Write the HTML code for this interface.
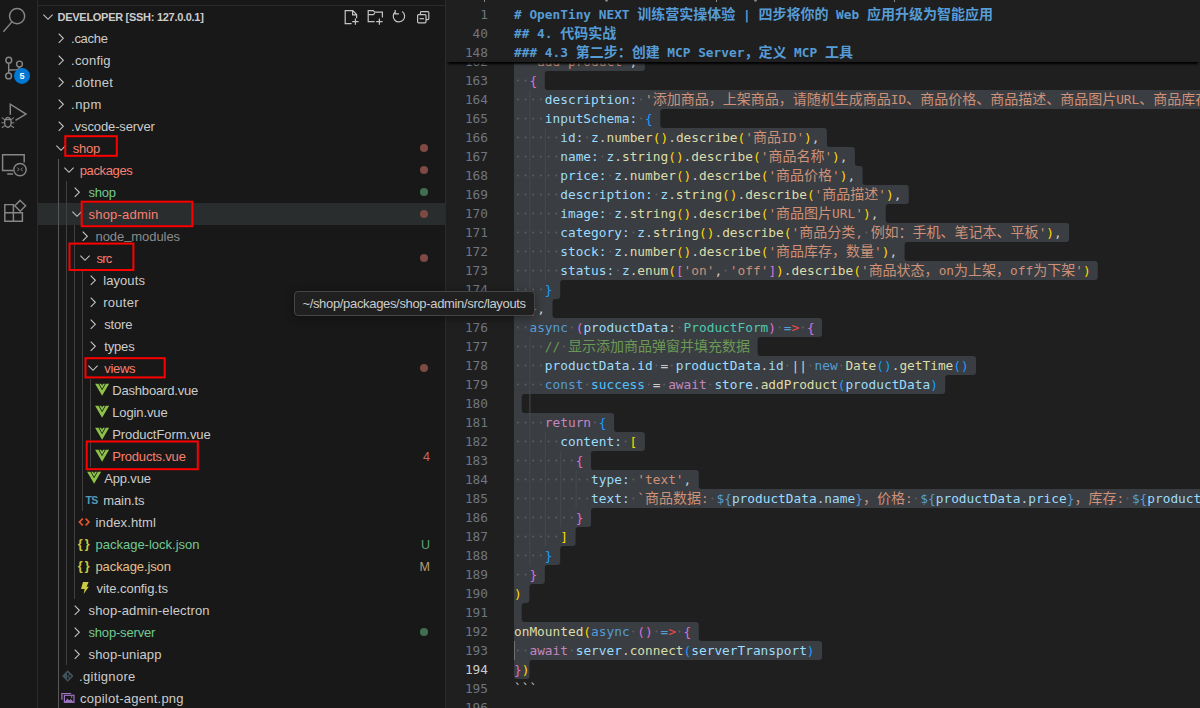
<!DOCTYPE html>
<html lang="zh"><head><meta charset="utf-8"><title>VS Code</title>
<style>
html,body{margin:0;padding:0;background:#1f1f1f;}
body{width:1200px;height:708px;overflow:hidden;position:relative;font-family:"Liberation Sans","Noto Sans CJK SC",sans-serif;}
#act{position:absolute;left:0;top:0;width:37px;height:708px;background:#181818;border-right:1px solid #2b2b2b;}
#side{position:absolute;left:38px;top:0;width:407px;height:708px;background:#181818;border-right:1px solid #2b2b2b;}
#sidetop{position:absolute;left:38px;top:5px;width:407px;height:1px;background:#2b2b2b}
.tl{position:absolute;height:22px;line-height:22px;font-size:13px;white-space:nowrap}
.us{position:relative;top:-2px}
.tb{position:absolute;height:22px;line-height:22px;font-size:12.5px;left:400px;white-space:nowrap;text-align:right;width:30px;opacity:.78}
.hdr{position:absolute;top:6px;height:22px;line-height:22px;font-size:11px;font-weight:700;color:#cccccc;white-space:nowrap}
.rowsel{position:absolute;left:38px;top:203px;width:407px;height:22px;background:#2a2d2e}
svg.ov{position:absolute;left:0;top:0;pointer-events:none}
.ln{position:absolute;left:448px;width:40px;text-align:right;height:19px;line-height:19px;font-family:"DejaVu Sans Mono","Liberation Mono",monospace;font-size:12.8px;color:#6e7681;white-space:pre}
.ln.act{color:#cccccc}
.cl{position:absolute;left:514px;height:19px;line-height:19px;font-family:"DejaVu Sans Mono","Liberation Mono","Noto Sans CJK SC",monospace;font-size:12.8px;white-space:pre;color:#ccc}
.cl.b{font-weight:700}
.cj{font-family:"Noto Sans CJK SC",sans-serif;font-size:14px;line-height:1px}
#sticky{position:absolute;left:446px;top:0;width:754px;height:62px;background:#1f1f1f;box-shadow:0 4px 2px -2px #000;}
#tip{position:absolute;left:294px;top:291px;width:239px;height:23px;background:#202020;border:1px solid #454545;border-radius:4px;color:#cccccc;font-size:13px;line-height:23px;white-space:nowrap;box-shadow:0 2px 8px rgba(0,0,0,0.36)}
#tip span{position:absolute;top:0}
</style></head><body>
<div id="act"></div>
<div id="side"></div>
<div id="sidetop"></div>
<div class="rowsel"></div>
<svg class="ov" width="1200" height="708" viewBox="0 0 1200 708"><path d="M517 52 L641.90 52 A3 3 0 0 1 644.90 55 L644.90 68 A3 3 0 0 1 641.90 71 L547.80 71 A3 3 0 0 0 544.80 74 L544.80 87 A3 3 0 0 0 547.80 90 L1207 90 A3 3 0 0 1 1210 93 L1210 106 A3 3 0 0 1 1207 109 L663.30 109 A3 3 0 0 0 660.30 112 L660.30 125 A3 3 0 0 0 663.30 128 L823.90 128 A3 3 0 0 1 826.90 131 L826.90 144 A3 3 0 0 0 829.90 147 L851.90 147 A3 3 0 0 1 854.90 150 L854.90 163 A3 3 0 0 0 857.90 166 L859.60 166 A3 3 0 0 1 862.60 169 L862.60 182 A3 3 0 0 0 865.60 185 L905.80 185 A3 3 0 0 1 908.80 188 L908.80 201 A3 3 0 0 1 905.80 204 L888.7 204 A3 3 0 0 0 885.7 207 L885.7 220 A3 3 0 0 0 888.7 223 L1066.10 223 A3 3 0 0 1 1069.10 226 L1069.10 239 A3 3 0 0 1 1066.10 242 L907.60 242 A3 3 0 0 0 904.60 245 L904.60 258 A3 3 0 0 0 907.60 261 L1094.8 261 A3 3 0 0 1 1097.8 264 L1097.8 277 A3 3 0 0 1 1094.8 280 L563.2 280 A3 3 0 0 0 560.2 283 L560.2 296 A3 3 0 0 1 557.2 299 L555.5 299 A3 3 0 0 0 552.5 302 L552.5 315 A3 3 0 0 0 555.5 318 L819.0 318 A3 3 0 0 1 822.0 321 L822.0 334 A3 3 0 0 1 819.0 337 L760.6 337 A3 3 0 0 0 757.6 340 L757.6 353 A3 3 0 0 0 760.6 356 L973.0 356 A3 3 0 0 1 976.0 359 L976.0 372 A3 3 0 0 1 973.0 375 L948.2 375 A3 3 0 0 0 945.2 378 L945.2 391 A3 3 0 0 1 942.2 394 L524.7 394 A3 3 0 0 0 521.7 397 L521.7 410 A3 3 0 0 0 524.7 413 L611.1 413 A3 3 0 0 1 614.1 416 L614.1 429 A3 3 0 0 0 617.1 432 L641.90 432 A3 3 0 0 1 644.90 435 L644.90 448 A3 3 0 0 1 641.90 451 L594.0 451 A3 3 0 0 0 591.0 454 L591.0 467 A3 3 0 0 0 594.0 470 L695.80 470 A3 3 0 0 1 698.80 473 L698.80 486 A3 3 0 0 0 701.80 489 L1207 489 A3 3 0 0 1 1210 492 L1210 505 A3 3 0 0 1 1207 508 L594.0 508 A3 3 0 0 0 591.0 511 L591.0 524 A3 3 0 0 1 588.0 527 L578.6 527 A3 3 0 0 0 575.6 530 L575.6 543 A3 3 0 0 1 572.6 546 L563.2 546 A3 3 0 0 0 560.2 549 L560.2 562 A3 3 0 0 1 557.2 565 L547.80 565 A3 3 0 0 0 544.80 568 L544.80 581 A3 3 0 0 1 541.80 584 L532.40 584 A3 3 0 0 0 529.40 587 L529.40 600 A3 3 0 0 1 526.40 603 L524.7 603 A3 3 0 0 0 521.7 606 L521.7 619 A3 3 0 0 0 524.7 622 L695.80 622 A3 3 0 0 1 698.80 625 L698.80 638 A3 3 0 0 0 701.80 641 L819.0 641 A3 3 0 0 1 822.0 644 L822.0 657 A3 3 0 0 1 819.0 660 L532.4 660 A3 3 0 0 0 529.4 663 L529.4 676 A3 3 0 0 1 526.4 679 L517 679 A3 3 0 0 1 514 676 L514 55 A3 3 0 0 1 517 52 Z" fill="#3a3d41"/><rect x="529.4" y="90" width="1" height="19" fill="#474a4e"/><rect x="529.4" y="109" width="1" height="19" fill="#474a4e"/><rect x="529.4" y="128" width="1" height="19" fill="#474a4e"/><rect x="544.8" y="128" width="1" height="19" fill="#474a4e"/><rect x="529.4" y="147" width="1" height="19" fill="#474a4e"/><rect x="544.8" y="147" width="1" height="19" fill="#474a4e"/><rect x="529.4" y="166" width="1" height="19" fill="#474a4e"/><rect x="544.8" y="166" width="1" height="19" fill="#474a4e"/><rect x="529.4" y="185" width="1" height="19" fill="#474a4e"/><rect x="544.8" y="185" width="1" height="19" fill="#474a4e"/><rect x="529.4" y="204" width="1" height="19" fill="#474a4e"/><rect x="544.8" y="204" width="1" height="19" fill="#474a4e"/><rect x="529.4" y="223" width="1" height="19" fill="#474a4e"/><rect x="544.8" y="223" width="1" height="19" fill="#474a4e"/><rect x="529.4" y="242" width="1" height="19" fill="#474a4e"/><rect x="544.8" y="242" width="1" height="19" fill="#474a4e"/><rect x="529.4" y="261" width="1" height="19" fill="#474a4e"/><rect x="544.8" y="261" width="1" height="19" fill="#474a4e"/><rect x="529.4" y="280" width="1" height="19" fill="#474a4e"/><rect x="529.4" y="337" width="1" height="19" fill="#474a4e"/><rect x="529.4" y="356" width="1" height="19" fill="#474a4e"/><rect x="529.4" y="375" width="1" height="19" fill="#474a4e"/><rect x="529.4" y="394" width="1" height="19" fill="#474a4e"/><rect x="529.4" y="413" width="1" height="19" fill="#474a4e"/><rect x="529.4" y="432" width="1" height="19" fill="#474a4e"/><rect x="544.8" y="432" width="1" height="19" fill="#474a4e"/><rect x="529.4" y="451" width="1" height="19" fill="#474a4e"/><rect x="544.8" y="451" width="1" height="19" fill="#474a4e"/><rect x="560.2" y="451" width="1" height="19" fill="#474a4e"/><rect x="529.4" y="470" width="1" height="19" fill="#474a4e"/><rect x="544.8" y="470" width="1" height="19" fill="#474a4e"/><rect x="560.2" y="470" width="1" height="19" fill="#474a4e"/><rect x="575.6" y="470" width="1" height="19" fill="#474a4e"/><rect x="529.4" y="489" width="1" height="19" fill="#474a4e"/><rect x="544.8" y="489" width="1" height="19" fill="#474a4e"/><rect x="560.2" y="489" width="1" height="19" fill="#474a4e"/><rect x="575.6" y="489" width="1" height="19" fill="#474a4e"/><rect x="529.4" y="508" width="1" height="19" fill="#474a4e"/><rect x="544.8" y="508" width="1" height="19" fill="#474a4e"/><rect x="560.2" y="508" width="1" height="19" fill="#474a4e"/><rect x="529.4" y="527" width="1" height="19" fill="#474a4e"/><rect x="544.8" y="527" width="1" height="19" fill="#474a4e"/><rect x="529.4" y="546" width="1" height="19" fill="#474a4e"/><rect x="514.0" y="641" width="1" height="19" fill="#707070"/><rect x="516.95" y="60.6" width="1.8" height="1.8" rx="0.7" fill="#5c5e62"/><rect x="524.65" y="60.6" width="1.8" height="1.8" rx="0.7" fill="#5c5e62"/><rect x="516.95" y="79.6" width="1.8" height="1.8" rx="0.7" fill="#5c5e62"/><rect x="524.65" y="79.6" width="1.8" height="1.8" rx="0.7" fill="#5c5e62"/><rect x="516.95" y="98.6" width="1.8" height="1.8" rx="0.7" fill="#5c5e62"/><rect x="524.65" y="98.6" width="1.8" height="1.8" rx="0.7" fill="#5c5e62"/><rect x="532.35" y="98.6" width="1.8" height="1.8" rx="0.7" fill="#5c5e62"/><rect x="540.05" y="98.6" width="1.8" height="1.8" rx="0.7" fill="#5c5e62"/><rect x="640.15" y="98.6" width="1.8" height="1.8" rx="0.7" fill="#5c5e62"/><rect x="516.95" y="117.6" width="1.8" height="1.8" rx="0.7" fill="#5c5e62"/><rect x="524.65" y="117.6" width="1.8" height="1.8" rx="0.7" fill="#5c5e62"/><rect x="532.35" y="117.6" width="1.8" height="1.8" rx="0.7" fill="#5c5e62"/><rect x="540.05" y="117.6" width="1.8" height="1.8" rx="0.7" fill="#5c5e62"/><rect x="640.15" y="117.6" width="1.8" height="1.8" rx="0.7" fill="#5c5e62"/><rect x="516.95" y="136.6" width="1.8" height="1.8" rx="0.7" fill="#5c5e62"/><rect x="524.65" y="136.6" width="1.8" height="1.8" rx="0.7" fill="#5c5e62"/><rect x="532.35" y="136.6" width="1.8" height="1.8" rx="0.7" fill="#5c5e62"/><rect x="540.05" y="136.6" width="1.8" height="1.8" rx="0.7" fill="#5c5e62"/><rect x="547.75" y="136.6" width="1.8" height="1.8" rx="0.7" fill="#5c5e62"/><rect x="555.45" y="136.6" width="1.8" height="1.8" rx="0.7" fill="#5c5e62"/><rect x="586.25" y="136.6" width="1.8" height="1.8" rx="0.7" fill="#5c5e62"/><rect x="516.95" y="155.6" width="1.8" height="1.8" rx="0.7" fill="#5c5e62"/><rect x="524.65" y="155.6" width="1.8" height="1.8" rx="0.7" fill="#5c5e62"/><rect x="532.35" y="155.6" width="1.8" height="1.8" rx="0.7" fill="#5c5e62"/><rect x="540.05" y="155.6" width="1.8" height="1.8" rx="0.7" fill="#5c5e62"/><rect x="547.75" y="155.6" width="1.8" height="1.8" rx="0.7" fill="#5c5e62"/><rect x="555.45" y="155.6" width="1.8" height="1.8" rx="0.7" fill="#5c5e62"/><rect x="601.65" y="155.6" width="1.8" height="1.8" rx="0.7" fill="#5c5e62"/><rect x="516.95" y="174.6" width="1.8" height="1.8" rx="0.7" fill="#5c5e62"/><rect x="524.65" y="174.6" width="1.8" height="1.8" rx="0.7" fill="#5c5e62"/><rect x="532.35" y="174.6" width="1.8" height="1.8" rx="0.7" fill="#5c5e62"/><rect x="540.05" y="174.6" width="1.8" height="1.8" rx="0.7" fill="#5c5e62"/><rect x="547.75" y="174.6" width="1.8" height="1.8" rx="0.7" fill="#5c5e62"/><rect x="555.45" y="174.6" width="1.8" height="1.8" rx="0.7" fill="#5c5e62"/><rect x="609.35" y="174.6" width="1.8" height="1.8" rx="0.7" fill="#5c5e62"/><rect x="516.95" y="193.6" width="1.8" height="1.8" rx="0.7" fill="#5c5e62"/><rect x="524.65" y="193.6" width="1.8" height="1.8" rx="0.7" fill="#5c5e62"/><rect x="532.35" y="193.6" width="1.8" height="1.8" rx="0.7" fill="#5c5e62"/><rect x="540.05" y="193.6" width="1.8" height="1.8" rx="0.7" fill="#5c5e62"/><rect x="547.75" y="193.6" width="1.8" height="1.8" rx="0.7" fill="#5c5e62"/><rect x="555.45" y="193.6" width="1.8" height="1.8" rx="0.7" fill="#5c5e62"/><rect x="655.55" y="193.6" width="1.8" height="1.8" rx="0.7" fill="#5c5e62"/><rect x="516.95" y="212.6" width="1.8" height="1.8" rx="0.7" fill="#5c5e62"/><rect x="524.65" y="212.6" width="1.8" height="1.8" rx="0.7" fill="#5c5e62"/><rect x="532.35" y="212.6" width="1.8" height="1.8" rx="0.7" fill="#5c5e62"/><rect x="540.05" y="212.6" width="1.8" height="1.8" rx="0.7" fill="#5c5e62"/><rect x="547.75" y="212.6" width="1.8" height="1.8" rx="0.7" fill="#5c5e62"/><rect x="555.45" y="212.6" width="1.8" height="1.8" rx="0.7" fill="#5c5e62"/><rect x="609.35" y="212.6" width="1.8" height="1.8" rx="0.7" fill="#5c5e62"/><rect x="516.95" y="231.6" width="1.8" height="1.8" rx="0.7" fill="#5c5e62"/><rect x="524.65" y="231.6" width="1.8" height="1.8" rx="0.7" fill="#5c5e62"/><rect x="532.35" y="231.6" width="1.8" height="1.8" rx="0.7" fill="#5c5e62"/><rect x="540.05" y="231.6" width="1.8" height="1.8" rx="0.7" fill="#5c5e62"/><rect x="547.75" y="231.6" width="1.8" height="1.8" rx="0.7" fill="#5c5e62"/><rect x="555.45" y="231.6" width="1.8" height="1.8" rx="0.7" fill="#5c5e62"/><rect x="632.45" y="231.6" width="1.8" height="1.8" rx="0.7" fill="#5c5e62"/><rect x="865.55" y="231.6" width="1.8" height="1.8" rx="0.7" fill="#5c5e62"/><rect x="516.95" y="250.6" width="1.8" height="1.8" rx="0.7" fill="#5c5e62"/><rect x="524.65" y="250.6" width="1.8" height="1.8" rx="0.7" fill="#5c5e62"/><rect x="532.35" y="250.6" width="1.8" height="1.8" rx="0.7" fill="#5c5e62"/><rect x="540.05" y="250.6" width="1.8" height="1.8" rx="0.7" fill="#5c5e62"/><rect x="547.75" y="250.6" width="1.8" height="1.8" rx="0.7" fill="#5c5e62"/><rect x="555.45" y="250.6" width="1.8" height="1.8" rx="0.7" fill="#5c5e62"/><rect x="609.35" y="250.6" width="1.8" height="1.8" rx="0.7" fill="#5c5e62"/><rect x="516.95" y="269.6" width="1.8" height="1.8" rx="0.7" fill="#5c5e62"/><rect x="524.65" y="269.6" width="1.8" height="1.8" rx="0.7" fill="#5c5e62"/><rect x="532.35" y="269.6" width="1.8" height="1.8" rx="0.7" fill="#5c5e62"/><rect x="540.05" y="269.6" width="1.8" height="1.8" rx="0.7" fill="#5c5e62"/><rect x="547.75" y="269.6" width="1.8" height="1.8" rx="0.7" fill="#5c5e62"/><rect x="555.45" y="269.6" width="1.8" height="1.8" rx="0.7" fill="#5c5e62"/><rect x="617.05" y="269.6" width="1.8" height="1.8" rx="0.7" fill="#5c5e62"/><rect x="724.85" y="269.6" width="1.8" height="1.8" rx="0.7" fill="#5c5e62"/><rect x="516.95" y="288.6" width="1.8" height="1.8" rx="0.7" fill="#5c5e62"/><rect x="524.65" y="288.6" width="1.8" height="1.8" rx="0.7" fill="#5c5e62"/><rect x="532.35" y="288.6" width="1.8" height="1.8" rx="0.7" fill="#5c5e62"/><rect x="540.05" y="288.6" width="1.8" height="1.8" rx="0.7" fill="#5c5e62"/><rect x="516.95" y="307.6" width="1.8" height="1.8" rx="0.7" fill="#5c5e62"/><rect x="524.65" y="307.6" width="1.8" height="1.8" rx="0.7" fill="#5c5e62"/><rect x="516.95" y="326.6" width="1.8" height="1.8" rx="0.7" fill="#5c5e62"/><rect x="524.65" y="326.6" width="1.8" height="1.8" rx="0.7" fill="#5c5e62"/><rect x="570.85" y="326.6" width="1.8" height="1.8" rx="0.7" fill="#5c5e62"/><rect x="678.65" y="326.6" width="1.8" height="1.8" rx="0.7" fill="#5c5e62"/><rect x="778.75" y="326.6" width="1.8" height="1.8" rx="0.7" fill="#5c5e62"/><rect x="801.85" y="326.6" width="1.8" height="1.8" rx="0.7" fill="#5c5e62"/><rect x="516.95" y="345.6" width="1.8" height="1.8" rx="0.7" fill="#5c5e62"/><rect x="524.65" y="345.6" width="1.8" height="1.8" rx="0.7" fill="#5c5e62"/><rect x="532.35" y="345.6" width="1.8" height="1.8" rx="0.7" fill="#5c5e62"/><rect x="540.05" y="345.6" width="1.8" height="1.8" rx="0.7" fill="#5c5e62"/><rect x="563.15" y="345.6" width="1.8" height="1.8" rx="0.7" fill="#5c5e62"/><rect x="516.95" y="364.6" width="1.8" height="1.8" rx="0.7" fill="#5c5e62"/><rect x="524.65" y="364.6" width="1.8" height="1.8" rx="0.7" fill="#5c5e62"/><rect x="532.35" y="364.6" width="1.8" height="1.8" rx="0.7" fill="#5c5e62"/><rect x="540.05" y="364.6" width="1.8" height="1.8" rx="0.7" fill="#5c5e62"/><rect x="655.55" y="364.6" width="1.8" height="1.8" rx="0.7" fill="#5c5e62"/><rect x="670.95" y="364.6" width="1.8" height="1.8" rx="0.7" fill="#5c5e62"/><rect x="786.45" y="364.6" width="1.8" height="1.8" rx="0.7" fill="#5c5e62"/><rect x="809.55" y="364.6" width="1.8" height="1.8" rx="0.7" fill="#5c5e62"/><rect x="840.35" y="364.6" width="1.8" height="1.8" rx="0.7" fill="#5c5e62"/><rect x="516.95" y="383.6" width="1.8" height="1.8" rx="0.7" fill="#5c5e62"/><rect x="524.65" y="383.6" width="1.8" height="1.8" rx="0.7" fill="#5c5e62"/><rect x="532.35" y="383.6" width="1.8" height="1.8" rx="0.7" fill="#5c5e62"/><rect x="540.05" y="383.6" width="1.8" height="1.8" rx="0.7" fill="#5c5e62"/><rect x="586.25" y="383.6" width="1.8" height="1.8" rx="0.7" fill="#5c5e62"/><rect x="647.85" y="383.6" width="1.8" height="1.8" rx="0.7" fill="#5c5e62"/><rect x="663.25" y="383.6" width="1.8" height="1.8" rx="0.7" fill="#5c5e62"/><rect x="709.45" y="383.6" width="1.8" height="1.8" rx="0.7" fill="#5c5e62"/><rect x="516.95" y="421.6" width="1.8" height="1.8" rx="0.7" fill="#5c5e62"/><rect x="524.65" y="421.6" width="1.8" height="1.8" rx="0.7" fill="#5c5e62"/><rect x="532.35" y="421.6" width="1.8" height="1.8" rx="0.7" fill="#5c5e62"/><rect x="540.05" y="421.6" width="1.8" height="1.8" rx="0.7" fill="#5c5e62"/><rect x="593.95" y="421.6" width="1.8" height="1.8" rx="0.7" fill="#5c5e62"/><rect x="516.95" y="440.6" width="1.8" height="1.8" rx="0.7" fill="#5c5e62"/><rect x="524.65" y="440.6" width="1.8" height="1.8" rx="0.7" fill="#5c5e62"/><rect x="532.35" y="440.6" width="1.8" height="1.8" rx="0.7" fill="#5c5e62"/><rect x="540.05" y="440.6" width="1.8" height="1.8" rx="0.7" fill="#5c5e62"/><rect x="547.75" y="440.6" width="1.8" height="1.8" rx="0.7" fill="#5c5e62"/><rect x="555.45" y="440.6" width="1.8" height="1.8" rx="0.7" fill="#5c5e62"/><rect x="624.75" y="440.6" width="1.8" height="1.8" rx="0.7" fill="#5c5e62"/><rect x="516.95" y="459.6" width="1.8" height="1.8" rx="0.7" fill="#5c5e62"/><rect x="524.65" y="459.6" width="1.8" height="1.8" rx="0.7" fill="#5c5e62"/><rect x="532.35" y="459.6" width="1.8" height="1.8" rx="0.7" fill="#5c5e62"/><rect x="540.05" y="459.6" width="1.8" height="1.8" rx="0.7" fill="#5c5e62"/><rect x="547.75" y="459.6" width="1.8" height="1.8" rx="0.7" fill="#5c5e62"/><rect x="555.45" y="459.6" width="1.8" height="1.8" rx="0.7" fill="#5c5e62"/><rect x="563.15" y="459.6" width="1.8" height="1.8" rx="0.7" fill="#5c5e62"/><rect x="570.85" y="459.6" width="1.8" height="1.8" rx="0.7" fill="#5c5e62"/><rect x="516.95" y="478.6" width="1.8" height="1.8" rx="0.7" fill="#5c5e62"/><rect x="524.65" y="478.6" width="1.8" height="1.8" rx="0.7" fill="#5c5e62"/><rect x="532.35" y="478.6" width="1.8" height="1.8" rx="0.7" fill="#5c5e62"/><rect x="540.05" y="478.6" width="1.8" height="1.8" rx="0.7" fill="#5c5e62"/><rect x="547.75" y="478.6" width="1.8" height="1.8" rx="0.7" fill="#5c5e62"/><rect x="555.45" y="478.6" width="1.8" height="1.8" rx="0.7" fill="#5c5e62"/><rect x="563.15" y="478.6" width="1.8" height="1.8" rx="0.7" fill="#5c5e62"/><rect x="570.85" y="478.6" width="1.8" height="1.8" rx="0.7" fill="#5c5e62"/><rect x="578.55" y="478.6" width="1.8" height="1.8" rx="0.7" fill="#5c5e62"/><rect x="586.25" y="478.6" width="1.8" height="1.8" rx="0.7" fill="#5c5e62"/><rect x="632.45" y="478.6" width="1.8" height="1.8" rx="0.7" fill="#5c5e62"/><rect x="516.95" y="497.6" width="1.8" height="1.8" rx="0.7" fill="#5c5e62"/><rect x="524.65" y="497.6" width="1.8" height="1.8" rx="0.7" fill="#5c5e62"/><rect x="532.35" y="497.6" width="1.8" height="1.8" rx="0.7" fill="#5c5e62"/><rect x="540.05" y="497.6" width="1.8" height="1.8" rx="0.7" fill="#5c5e62"/><rect x="547.75" y="497.6" width="1.8" height="1.8" rx="0.7" fill="#5c5e62"/><rect x="555.45" y="497.6" width="1.8" height="1.8" rx="0.7" fill="#5c5e62"/><rect x="563.15" y="497.6" width="1.8" height="1.8" rx="0.7" fill="#5c5e62"/><rect x="570.85" y="497.6" width="1.8" height="1.8" rx="0.7" fill="#5c5e62"/><rect x="578.55" y="497.6" width="1.8" height="1.8" rx="0.7" fill="#5c5e62"/><rect x="586.25" y="497.6" width="1.8" height="1.8" rx="0.7" fill="#5c5e62"/><rect x="632.45" y="497.6" width="1.8" height="1.8" rx="0.7" fill="#5c5e62"/><rect x="711.55" y="497.6" width="1.8" height="1.8" rx="0.7" fill="#5c5e62"/><rect x="915.25" y="497.6" width="1.8" height="1.8" rx="0.7" fill="#5c5e62"/><rect x="1126.65" y="497.6" width="1.8" height="1.8" rx="0.7" fill="#5c5e62"/><rect x="516.95" y="516.6" width="1.8" height="1.8" rx="0.7" fill="#5c5e62"/><rect x="524.65" y="516.6" width="1.8" height="1.8" rx="0.7" fill="#5c5e62"/><rect x="532.35" y="516.6" width="1.8" height="1.8" rx="0.7" fill="#5c5e62"/><rect x="540.05" y="516.6" width="1.8" height="1.8" rx="0.7" fill="#5c5e62"/><rect x="547.75" y="516.6" width="1.8" height="1.8" rx="0.7" fill="#5c5e62"/><rect x="555.45" y="516.6" width="1.8" height="1.8" rx="0.7" fill="#5c5e62"/><rect x="563.15" y="516.6" width="1.8" height="1.8" rx="0.7" fill="#5c5e62"/><rect x="570.85" y="516.6" width="1.8" height="1.8" rx="0.7" fill="#5c5e62"/><rect x="516.95" y="535.6" width="1.8" height="1.8" rx="0.7" fill="#5c5e62"/><rect x="524.65" y="535.6" width="1.8" height="1.8" rx="0.7" fill="#5c5e62"/><rect x="532.35" y="535.6" width="1.8" height="1.8" rx="0.7" fill="#5c5e62"/><rect x="540.05" y="535.6" width="1.8" height="1.8" rx="0.7" fill="#5c5e62"/><rect x="547.75" y="535.6" width="1.8" height="1.8" rx="0.7" fill="#5c5e62"/><rect x="555.45" y="535.6" width="1.8" height="1.8" rx="0.7" fill="#5c5e62"/><rect x="516.95" y="554.6" width="1.8" height="1.8" rx="0.7" fill="#5c5e62"/><rect x="524.65" y="554.6" width="1.8" height="1.8" rx="0.7" fill="#5c5e62"/><rect x="532.35" y="554.6" width="1.8" height="1.8" rx="0.7" fill="#5c5e62"/><rect x="540.05" y="554.6" width="1.8" height="1.8" rx="0.7" fill="#5c5e62"/><rect x="516.95" y="573.6" width="1.8" height="1.8" rx="0.7" fill="#5c5e62"/><rect x="524.65" y="573.6" width="1.8" height="1.8" rx="0.7" fill="#5c5e62"/><rect x="632.45" y="630.6" width="1.8" height="1.8" rx="0.7" fill="#5c5e62"/><rect x="655.55" y="630.6" width="1.8" height="1.8" rx="0.7" fill="#5c5e62"/><rect x="678.65" y="630.6" width="1.8" height="1.8" rx="0.7" fill="#5c5e62"/><rect x="516.95" y="649.6" width="1.8" height="1.8" rx="0.7" fill="#5c5e62"/><rect x="524.65" y="649.6" width="1.8" height="1.8" rx="0.7" fill="#5c5e62"/><rect x="570.85" y="649.6" width="1.8" height="1.8" rx="0.7" fill="#5c5e62"/></svg>
<div class="ln" style="top:52px">162</div><div class="cl" style="top:52px"><span style="color:#cccccc">  </span><span style="color:#ce9178">&#x27;add-product&#x27;</span><span style="color:#cccccc">,</span></div><div class="ln" style="top:71px">163</div><div class="cl" style="top:71px"><span style="color:#cccccc">  </span><span style="color:#da70d6">{</span></div><div class="ln" style="top:90px">164</div><div class="cl" style="top:90px"><span style="color:#cccccc">    </span><span style="color:#9cdcfe">description</span><span style="color:#9cdcfe">:</span><span style="color:#cccccc"> </span><span style="color:#ce9178">&#x27;<span class="cj">添加商品，上架商品，请随机生成商品</span>ID<span class="cj">、商品价格、商品描述、商品图片</span>URL<span class="cj">、商品库存等信息</span>&#x27;</span><span style="color:#cccccc">,</span></div><div class="ln" style="top:109px">165</div><div class="cl" style="top:109px"><span style="color:#cccccc">    </span><span style="color:#9cdcfe">inputSchema</span><span style="color:#9cdcfe">:</span><span style="color:#cccccc"> </span><span style="color:#179fff">{</span></div><div class="ln" style="top:128px">166</div><div class="cl" style="top:128px"><span style="color:#cccccc">      </span><span style="color:#9cdcfe">id</span><span style="color:#9cdcfe">:</span><span style="color:#cccccc"> </span><span style="color:#9cdcfe">z</span><span style="color:#cccccc">.</span><span style="color:#dcdcaa">number</span><span style="color:#ffd700">()</span><span style="color:#cccccc">.</span><span style="color:#dcdcaa">describe</span><span style="color:#ffd700">(</span><span style="color:#ce9178">&#x27;<span class="cj">商品</span>ID&#x27;</span><span style="color:#ffd700">)</span><span style="color:#cccccc">,</span></div><div class="ln" style="top:147px">167</div><div class="cl" style="top:147px"><span style="color:#cccccc">      </span><span style="color:#9cdcfe">name</span><span style="color:#9cdcfe">:</span><span style="color:#cccccc"> </span><span style="color:#9cdcfe">z</span><span style="color:#cccccc">.</span><span style="color:#dcdcaa">string</span><span style="color:#ffd700">()</span><span style="color:#cccccc">.</span><span style="color:#dcdcaa">describe</span><span style="color:#ffd700">(</span><span style="color:#ce9178">&#x27;<span class="cj">商品名称</span>&#x27;</span><span style="color:#ffd700">)</span><span style="color:#cccccc">,</span></div><div class="ln" style="top:166px">168</div><div class="cl" style="top:166px"><span style="color:#cccccc">      </span><span style="color:#9cdcfe">price</span><span style="color:#9cdcfe">:</span><span style="color:#cccccc"> </span><span style="color:#9cdcfe">z</span><span style="color:#cccccc">.</span><span style="color:#dcdcaa">number</span><span style="color:#ffd700">()</span><span style="color:#cccccc">.</span><span style="color:#dcdcaa">describe</span><span style="color:#ffd700">(</span><span style="color:#ce9178">&#x27;<span class="cj">商品价格</span>&#x27;</span><span style="color:#ffd700">)</span><span style="color:#cccccc">,</span></div><div class="ln" style="top:185px">169</div><div class="cl" style="top:185px"><span style="color:#cccccc">      </span><span style="color:#9cdcfe">description</span><span style="color:#9cdcfe">:</span><span style="color:#cccccc"> </span><span style="color:#9cdcfe">z</span><span style="color:#cccccc">.</span><span style="color:#dcdcaa">string</span><span style="color:#ffd700">()</span><span style="color:#cccccc">.</span><span style="color:#dcdcaa">describe</span><span style="color:#ffd700">(</span><span style="color:#ce9178">&#x27;<span class="cj">商品描述</span>&#x27;</span><span style="color:#ffd700">)</span><span style="color:#cccccc">,</span></div><div class="ln" style="top:204px">170</div><div class="cl" style="top:204px"><span style="color:#cccccc">      </span><span style="color:#9cdcfe">image</span><span style="color:#9cdcfe">:</span><span style="color:#cccccc"> </span><span style="color:#9cdcfe">z</span><span style="color:#cccccc">.</span><span style="color:#dcdcaa">string</span><span style="color:#ffd700">()</span><span style="color:#cccccc">.</span><span style="color:#dcdcaa">describe</span><span style="color:#ffd700">(</span><span style="color:#ce9178">&#x27;<span class="cj">商品图片</span>URL&#x27;</span><span style="color:#ffd700">)</span><span style="color:#cccccc">,</span></div><div class="ln" style="top:223px">171</div><div class="cl" style="top:223px"><span style="color:#cccccc">      </span><span style="color:#9cdcfe">category</span><span style="color:#9cdcfe">:</span><span style="color:#cccccc"> </span><span style="color:#9cdcfe">z</span><span style="color:#cccccc">.</span><span style="color:#dcdcaa">string</span><span style="color:#ffd700">()</span><span style="color:#cccccc">.</span><span style="color:#dcdcaa">describe</span><span style="color:#ffd700">(</span><span style="color:#ce9178">&#x27;<span class="cj">商品分类</span>, <span class="cj">例如：手机、笔记本、平板</span>&#x27;</span><span style="color:#ffd700">)</span><span style="color:#cccccc">,</span></div><div class="ln" style="top:242px">172</div><div class="cl" style="top:242px"><span style="color:#cccccc">      </span><span style="color:#9cdcfe">stock</span><span style="color:#9cdcfe">:</span><span style="color:#cccccc"> </span><span style="color:#9cdcfe">z</span><span style="color:#cccccc">.</span><span style="color:#dcdcaa">number</span><span style="color:#ffd700">()</span><span style="color:#cccccc">.</span><span style="color:#dcdcaa">describe</span><span style="color:#ffd700">(</span><span style="color:#ce9178">&#x27;<span class="cj">商品库存，数量</span>&#x27;</span><span style="color:#ffd700">)</span><span style="color:#cccccc">,</span></div><div class="ln" style="top:261px">173</div><div class="cl" style="top:261px"><span style="color:#cccccc">      </span><span style="color:#9cdcfe">status</span><span style="color:#9cdcfe">:</span><span style="color:#cccccc"> </span><span style="color:#9cdcfe">z</span><span style="color:#cccccc">.</span><span style="color:#dcdcaa">enum</span><span style="color:#ffd700">(</span><span style="color:#da70d6">[</span><span style="color:#ce9178">&#x27;on&#x27;</span><span style="color:#cccccc">, </span><span style="color:#ce9178">&#x27;off&#x27;</span><span style="color:#da70d6">]</span><span style="color:#ffd700">)</span><span style="color:#cccccc">.</span><span style="color:#dcdcaa">describe</span><span style="color:#ffd700">(</span><span style="color:#ce9178">&#x27;<span class="cj">商品状态，</span>on<span class="cj">为上架，</span>off<span class="cj">为下架</span>&#x27;</span><span style="color:#ffd700">)</span></div><div class="ln" style="top:280px">174</div><div class="cl" style="top:280px"><span style="color:#cccccc">    </span><span style="color:#179fff">}</span></div><div class="ln" style="top:299px">175</div><div class="cl" style="top:299px"><span style="color:#cccccc">  </span><span style="color:#da70d6">}</span><span style="color:#cccccc">,</span></div><div class="ln" style="top:318px">176</div><div class="cl" style="top:318px"><span style="color:#cccccc">  </span><span style="color:#569cd6">async</span><span style="color:#cccccc"> </span><span style="color:#da70d6">(</span><span style="color:#9cdcfe">productData</span><span style="color:#cccccc">:</span><span style="color:#cccccc"> </span><span style="color:#4ec9b0">ProductForm</span><span style="color:#da70d6">)</span><span style="color:#cccccc"> </span><span style="color:#569cd6">=</span><span style="color:#f44747">&gt;</span><span style="color:#cccccc"> </span><span style="color:#da70d6">{</span></div><div class="ln" style="top:337px">177</div><div class="cl" style="top:337px"><span style="color:#cccccc">    </span><span style="color:#6a9955">// <span class="cj">显示添加商品弹窗并填充数据</span></span></div><div class="ln" style="top:356px">178</div><div class="cl" style="top:356px"><span style="color:#cccccc">    </span><span style="color:#9cdcfe">productData</span><span style="color:#cccccc">.</span><span style="color:#9cdcfe">id</span><span style="color:#cccccc"> = </span><span style="color:#9cdcfe">productData</span><span style="color:#cccccc">.</span><span style="color:#9cdcfe">id</span><span style="color:#cccccc"> || </span><span style="color:#569cd6">new</span><span style="color:#cccccc"> </span><span style="color:#dcdcaa">Date</span><span style="color:#179fff">()</span><span style="color:#cccccc">.</span><span style="color:#dcdcaa">getTime</span><span style="color:#179fff">()</span></div><div class="ln" style="top:375px">179</div><div class="cl" style="top:375px"><span style="color:#cccccc">    </span><span style="color:#569cd6">const</span><span style="color:#cccccc"> </span><span style="color:#4fc1ff">success</span><span style="color:#cccccc"> = </span><span style="color:#c586c0">await</span><span style="color:#cccccc"> </span><span style="color:#9cdcfe">store</span><span style="color:#cccccc">.</span><span style="color:#dcdcaa">addProduct</span><span style="color:#179fff">(</span><span style="color:#9cdcfe">productData</span><span style="color:#179fff">)</span></div><div class="ln" style="top:394px">180</div><div class="ln" style="top:413px">181</div><div class="cl" style="top:413px"><span style="color:#cccccc">    </span><span style="color:#c586c0">return</span><span style="color:#cccccc"> </span><span style="color:#179fff">{</span></div><div class="ln" style="top:432px">182</div><div class="cl" style="top:432px"><span style="color:#cccccc">      </span><span style="color:#9cdcfe">content</span><span style="color:#9cdcfe">:</span><span style="color:#cccccc"> </span><span style="color:#ffd700">[</span></div><div class="ln" style="top:451px">183</div><div class="cl" style="top:451px"><span style="color:#cccccc">        </span><span style="color:#da70d6">{</span></div><div class="ln" style="top:470px">184</div><div class="cl" style="top:470px"><span style="color:#cccccc">          </span><span style="color:#9cdcfe">type</span><span style="color:#9cdcfe">:</span><span style="color:#cccccc"> </span><span style="color:#ce9178">&#x27;text&#x27;</span><span style="color:#cccccc">,</span></div><div class="ln" style="top:489px">185</div><div class="cl" style="top:489px"><span style="color:#cccccc">          </span><span style="color:#9cdcfe">text</span><span style="color:#9cdcfe">:</span><span style="color:#cccccc"> </span><span style="color:#ce9178">`<span class="cj">商品数据</span>: </span><span style="color:#569cd6">${</span><span style="color:#9cdcfe">productData</span><span style="color:#cccccc">.</span><span style="color:#9cdcfe">name</span><span style="color:#569cd6">}</span><span style="color:#ce9178"><span class="cj">，价格</span>: </span><span style="color:#569cd6">${</span><span style="color:#9cdcfe">productData</span><span style="color:#cccccc">.</span><span style="color:#9cdcfe">price</span><span style="color:#569cd6">}</span><span style="color:#ce9178"><span class="cj">，库存</span>: </span><span style="color:#569cd6">${</span><span style="color:#9cdcfe">productData</span><span style="color:#cccccc">.</span><span style="color:#9cdcfe">stock</span><span style="color:#569cd6">}</span><span style="color:#ce9178">`</span></div><div class="ln" style="top:508px">186</div><div class="cl" style="top:508px"><span style="color:#cccccc">        </span><span style="color:#da70d6">}</span></div><div class="ln" style="top:527px">187</div><div class="cl" style="top:527px"><span style="color:#cccccc">      </span><span style="color:#ffd700">]</span></div><div class="ln" style="top:546px">188</div><div class="cl" style="top:546px"><span style="color:#cccccc">    </span><span style="color:#179fff">}</span></div><div class="ln" style="top:565px">189</div><div class="cl" style="top:565px"><span style="color:#cccccc">  </span><span style="color:#da70d6">}</span></div><div class="ln" style="top:584px">190</div><div class="cl" style="top:584px"><span style="color:#ffd700">)</span></div><div class="ln" style="top:603px">191</div><div class="ln" style="top:622px">192</div><div class="cl" style="top:622px"><span style="color:#dcdcaa">onMounted</span><span style="color:#ffd700">(</span><span style="color:#569cd6">async</span><span style="color:#cccccc"> </span><span style="color:#da70d6">()</span><span style="color:#cccccc"> </span><span style="color:#569cd6">=</span><span style="color:#f44747">&gt;</span><span style="color:#cccccc"> </span><span style="color:#da70d6">{</span></div><div class="ln" style="top:641px">193</div><div class="cl" style="top:641px"><span style="color:#cccccc">  </span><span style="color:#c586c0">await</span><span style="color:#cccccc"> </span><span style="color:#9cdcfe">server</span><span style="color:#cccccc">.</span><span style="color:#dcdcaa">connect</span><span style="color:#179fff">(</span><span style="color:#9cdcfe">serverTransport</span><span style="color:#179fff">)</span></div><div class="ln act" style="top:660px">194</div><div class="cl" style="top:660px"><span style="color:#da70d6">}</span><span style="color:#ffd700">)</span></div><div class="ln" style="top:679px">195</div><div class="cl" style="top:679px"><span style="color:#cccccc">```</span></div><div class="ln" style="top:698px">196</div>
<div id="sticky"></div>
<div class="ln" style="top:5px">1</div><div class="cl b" style="top:5px"><span style="color:#569cd6"># OpenTiny NEXT <span class="cj">训练营实操体验</span> | <span class="cj">四步将你的</span> Web <span class="cj">应用升级为智能应用</span></span></div><div class="ln" style="top:24px">40</div><div class="cl b" style="top:24px"><span style="color:#569cd6">## 4. <span class="cj">代码实战</span></span></div><div class="ln" style="top:43px">148</div><div class="cl b" style="top:43px"><span style="color:#569cd6">### 4.3 <span class="cj">第二步：创建</span> MCP Server<span class="cj">，定义</span> MCP <span class="cj">工具</span></span></div>
<div class="hdr" style="left:57.6px;letter-spacing:-0.28800000000000003px">DEVELOPER [SSH: 127.0.0.1]</div>
<div class="tl" style="top:28px;left:71.1px;color:#cccccc;letter-spacing:-0.3px">.cache</div><div class="tl" style="top:50px;left:71.1px;color:#cccccc;letter-spacing:0.183px">.config</div><div class="tl" style="top:72px;left:71.1px;color:#cccccc;letter-spacing:0.35px">.dotnet</div><div class="tl" style="top:94px;left:71.1px;color:#cccccc;letter-spacing:0.467px">.npm</div><div class="tl" style="top:116px;left:71.1px;color:#cccccc;letter-spacing:-0.108px">.vscode-server</div><div class="tl" style="top:138px;left:72.7px;color:#f88070;letter-spacing:-0.233px">shop</div><div class="tl" style="top:160px;left:79.7px;color:#f88070;letter-spacing:-0.357px">packages</div><div class="tl" style="top:182px;left:88.5px;color:#73c991;letter-spacing:-0.233px">shop</div><div class="tl" style="top:204px;left:88.5px;color:#f88070;letter-spacing:0.2px">shop-admin</div><div class="tl" style="top:226px;left:95.5px;color:#8c8c8c;letter-spacing:-0.064px">node<span class="us">_</span>modules</div><div class="tl" style="top:248px;left:96.5px;color:#f88070;letter-spacing:-0.85px">src</div><div class="tl" style="top:270px;left:103.2px;color:#cccccc;letter-spacing:0.083px">layouts</div><div class="tl" style="top:292px;left:103.2px;color:#cccccc;letter-spacing:0.28px">router</div><div class="tl" style="top:314px;left:104.2px;color:#cccccc;letter-spacing:-0.15px">store</div><div class="tl" style="top:336px;left:104.2px;color:#cccccc;letter-spacing:-0.15px">types</div><div class="tl" style="top:358px;left:104.2px;color:#f88070;letter-spacing:-0.3px">views</div><div class="tl" style="top:380px;left:112.19999999999999px;color:#cccccc;letter-spacing:-0.167px">Dashboard.vue</div><div class="tl" style="top:402px;left:112.19999999999999px;color:#cccccc;letter-spacing:-0.113px">Login.vue</div><div class="tl" style="top:424px;left:112.19999999999999px;color:#cccccc;letter-spacing:-0.086px">ProductForm.vue</div><div class="tl" style="top:446px;left:112.19999999999999px;color:#f88070;letter-spacing:-0.2px">Products.vue</div><div class="tb" style="top:446px;color:#f88070">4</div><div class="tl" style="top:468px;left:104.2px;color:#cccccc;letter-spacing:-0.15px">App.vue</div><div class="tl" style="top:490px;left:103.2px;color:#cccccc;letter-spacing:-0.083px">main.ts</div><div class="tl" style="top:512px;left:95.5px;color:#cccccc;letter-spacing:0.133px">index.html</div><div class="tl" style="top:534px;left:95.5px;color:#73c991;letter-spacing:-0.006px">package-lock.json</div><div class="tb" style="top:534px;color:#73c991">U</div><div class="tl" style="top:556px;left:95.5px;color:#e2c08d;letter-spacing:-0.109px">package.json</div><div class="tb" style="top:556px;color:#e2c08d">M</div><div class="tl" style="top:578px;left:96.5px;color:#cccccc;letter-spacing:-0.062px">vite.config.ts</div><div class="tl" style="top:600px;left:88.5px;color:#cccccc;letter-spacing:0.139px">shop-admin-electron</div><div class="tl" style="top:622px;left:88.5px;color:#73c991;letter-spacing:-0.18px">shop-server</div><div class="tl" style="top:644px;left:88.5px;color:#cccccc;letter-spacing:0.14px">shop-uniapp</div><div class="tl" style="top:666px;left:79.1px;color:#cccccc;letter-spacing:0.3px">.gitignore</div><div class="tl" style="top:688px;left:80.1px;color:#cccccc;letter-spacing:0.231px">copilot-agent.png</div>
<svg class="ov" width="1200" height="708" viewBox="0 0 1200 708">
<path d="M43.4 14.7 L48 19.3 L52.6 14.7" fill="none" stroke="#c5c5c5" stroke-width="1.1"/>
<rect x="58" y="159" width="1" height="549" fill="#585858"/><rect x="66" y="181" width="1" height="484" fill="#404040"/><rect x="74" y="225" width="1" height="374" fill="#404040"/><rect x="82" y="269" width="1" height="242" fill="#404040"/><rect x="90" y="379" width="1" height="88" fill="#404040"/>
<path d="M58.7 33.699999999999996 L63.3 38.3 L58.7 42.9" fill="none" stroke="#c5c5c5" stroke-width="1.1"/><path d="M58.7 55.699999999999996 L63.3 60.3 L58.7 64.89999999999999" fill="none" stroke="#c5c5c5" stroke-width="1.1"/><path d="M58.7 77.7 L63.3 82.3 L58.7 86.89999999999999" fill="none" stroke="#c5c5c5" stroke-width="1.1"/><path d="M58.7 99.7 L63.3 104.3 L58.7 108.89999999999999" fill="none" stroke="#c5c5c5" stroke-width="1.1"/><path d="M58.7 121.7 L63.3 126.3 L58.7 130.9" fill="none" stroke="#c5c5c5" stroke-width="1.1"/><path d="M56.4 145.70000000000002 L61 150.3 L65.6 145.70000000000002" fill="none" stroke="#c5c5c5" stroke-width="1.1"/><circle cx="424" cy="148" r="4" fill="#7e4a43"/><path d="M64.4 167.70000000000002 L69 172.3 L73.6 167.70000000000002" fill="none" stroke="#c5c5c5" stroke-width="1.1"/><circle cx="424" cy="170" r="4" fill="#7e4a43"/><path d="M74.7 187.70000000000002 L79.3 192.3 L74.7 196.9" fill="none" stroke="#c5c5c5" stroke-width="1.1"/><circle cx="424" cy="192" r="4" fill="#41704f"/><path d="M72.4 211.70000000000002 L77 216.3 L81.6 211.70000000000002" fill="none" stroke="#c5c5c5" stroke-width="1.1"/><circle cx="424" cy="214" r="4" fill="#7e4a43"/><path d="M82.7 231.70000000000002 L87.3 236.3 L82.7 240.9" fill="none" stroke="#c5c5c5" stroke-width="1.1"/><path d="M80.4 255.70000000000002 L85 260.3 L89.6 255.70000000000002" fill="none" stroke="#c5c5c5" stroke-width="1.1"/><circle cx="424" cy="258" r="4" fill="#7e4a43"/><path d="M90.7 275.7 L95.3 280.3 L90.7 284.90000000000003" fill="none" stroke="#c5c5c5" stroke-width="1.1"/><path d="M90.7 297.7 L95.3 302.3 L90.7 306.90000000000003" fill="none" stroke="#c5c5c5" stroke-width="1.1"/><path d="M90.7 319.7 L95.3 324.3 L90.7 328.90000000000003" fill="none" stroke="#c5c5c5" stroke-width="1.1"/><path d="M90.7 341.7 L95.3 346.3 L90.7 350.90000000000003" fill="none" stroke="#c5c5c5" stroke-width="1.1"/><path d="M88.4 365.7 L93 370.3 L97.6 365.7" fill="none" stroke="#c5c5c5" stroke-width="1.1"/><circle cx="424" cy="368" r="4" fill="#7e4a43"/><g transform="translate(95.1,383.8)"><path d="M0 0 L3.3 0 L7 6.4 L10.7 0 L14 0 L7 12 Z" fill="#8dc149"/><path d="M4.2 0 L6 0 L7 1.8 L8 0 L9.8 0 L7 5 Z" fill="#8dc149"/></g><g transform="translate(95.1,405.8)"><path d="M0 0 L3.3 0 L7 6.4 L10.7 0 L14 0 L7 12 Z" fill="#8dc149"/><path d="M4.2 0 L6 0 L7 1.8 L8 0 L9.8 0 L7 5 Z" fill="#8dc149"/></g><g transform="translate(95.1,427.8)"><path d="M0 0 L3.3 0 L7 6.4 L10.7 0 L14 0 L7 12 Z" fill="#8dc149"/><path d="M4.2 0 L6 0 L7 1.8 L8 0 L9.8 0 L7 5 Z" fill="#8dc149"/></g><g transform="translate(95.1,449.8)"><path d="M0 0 L3.3 0 L7 6.4 L10.7 0 L14 0 L7 12 Z" fill="#8dc149"/><path d="M4.2 0 L6 0 L7 1.8 L8 0 L9.8 0 L7 5 Z" fill="#8dc149"/></g><g transform="translate(87.1,471.8)"><path d="M0 0 L3.3 0 L7 6.4 L10.7 0 L14 0 L7 12 Z" fill="#8dc149"/><path d="M4.2 0 L6 0 L7 1.8 L8 0 L9.8 0 L7 5 Z" fill="#8dc149"/></g><text x="85.4" y="503.7" font-family="Liberation Sans, sans-serif" font-weight="700" font-size="10.5" fill="#519aba" letter-spacing="-0.5">TS</text><path d="M82.8 518.6 L79.4 522 L82.8 525.4 M85.6 518.6 L89 522 L85.6 525.4" fill="none" stroke="#e4592e" stroke-width="1.6"/><text x="77.8" y="548" font-family="Liberation Sans, sans-serif" font-weight="700" font-size="12.5" fill="#cbcb41" letter-spacing="2">{}</text><text x="77.8" y="570" font-family="Liberation Sans, sans-serif" font-weight="700" font-size="12.5" fill="#cbcb41" letter-spacing="2">{}</text><path d="M83 582 L88.6 582 L86.6 586.8 L88.8 586.8 L83.6 594 L84.6 589 L81 589 Z" fill="#cbcb41"/><path d="M74.7 605.6999999999999 L79.3 610.3 L74.7 614.9" fill="none" stroke="#c5c5c5" stroke-width="1.1"/><path d="M74.7 627.6999999999999 L79.3 632.3 L74.7 636.9" fill="none" stroke="#c5c5c5" stroke-width="1.1"/><circle cx="424" cy="632" r="4" fill="#41704f"/><path d="M74.7 649.6999999999999 L79.3 654.3 L74.7 658.9" fill="none" stroke="#c5c5c5" stroke-width="1.1"/><g transform="translate(67.8,676) rotate(45)"><rect x="-4.1" y="-4.1" width="8.2" height="8.2" rx="0.8" fill="#41535b"/></g><circle cx="67.8" cy="673.8" r="1" fill="#181818"/><circle cx="67.8" cy="678.6" r="1" fill="#181818"/><circle cx="70.2" cy="676.2" r="1" fill="#181818"/><path d="M67.8 673.8 L67.8 678.6 M67.8 673.8 L70.2 676.2" stroke="#181818" stroke-width="0.8" fill="none"/><rect x="64.4" y="695.3" width="9.6" height="7" fill="none" stroke="#a074c4" stroke-width="1.2"/><path d="M61.9 699.8 L61.9 693.5 L71.2 693.5" fill="none" stroke="#a074c4" stroke-width="1.2"/><path d="M64.6 702.2 L67.4 698.4 L69.2 700.4 L70.8 699 L73.6 702.2 Z" fill="#a074c4"/><circle cx="71.6" cy="697.1" r="0.8" fill="#a074c4"/>
<rect x="65.3" y="136.2" width="51.5" height="19.6" fill="none" stroke="#ff0000" stroke-width="2"/><rect x="81.7" y="201.7" width="110.7" height="24.5" fill="none" stroke="#ff0000" stroke-width="2"/><rect x="69.5" y="243.6" width="63.9" height="26.4" fill="none" stroke="#ff0000" stroke-width="2"/><rect x="85.5" y="358.2" width="79.2" height="19.2" fill="none" stroke="#ff0000" stroke-width="2"/><rect x="86.7" y="441.5" width="111.1" height="27.7" fill="none" stroke="#ff0000" stroke-width="2"/>

<g fill="none" stroke="#868686" stroke-width="1.45">
<circle cx="17.1" cy="16.1" r="7.6"/><path d="M11.9 21.9 L3.4 31.8"/>
<circle cx="8.8" cy="60.2" r="2.9"/><circle cx="8.6" cy="75.9" r="2.9"/><circle cx="19.5" cy="64" r="2.9"/>
<path d="M8.7 63.1 L8.7 73 M19.5 66.9 C19.5 70 17 70 8.9 70"/>
<path d="M10.3 114.8 L10.3 104.2 L26 114.1 L15.5 120.3"/>
<ellipse cx="7.9" cy="122.3" rx="3.3" ry="4.9"/><path d="M4.8 119.6 L11 119.6 M1.8 117.6 L4.7 119.6 M1.5 122.8 L4.6 122.8 M1.8 127.8 L4.9 125.6 M14 117.6 L11.1 119.6 M14.3 122.8 L11.2 122.8 M14 127.8 L10.9 125.6" stroke-width="1.1"/>
<path d="M13.4 170.4 L2.6 170.4 L2.6 154.8 L24.2 154.8 L24.2 162.6 M7.2 174 L13 174"/>
<circle cx="20" cy="169.6" r="6.2"/><path d="M17.4 167.6 L19 169.4 L17.4 171.2 M22.6 167.6 L21 169.4 L22.6 171.2" stroke-width="1"/>
<path d="M4.8 204.6 L13.4 204.6 L13.4 221.2 L4.8 221.2 Z M4.8 212.8 L22.4 212.8 L22.4 221.2 L13.4 221.2"/>
<path d="M20.2 200.4 L25.6 205.8 L20.2 211.2 L14.8 205.8 Z"/>
</g>
<circle cx="22" cy="75.9" r="8" fill="#0078d4"/>
<text x="22" y="79.2" text-anchor="middle" font-family="Liberation Sans, sans-serif" font-weight="700" font-size="9" fill="#ffffff">5</text>


<g fill="none" stroke="#c5c5c5" stroke-width="1.2">
<path d="M351.6 23.6 L345.2 23.6 L345.2 10.6 L352.8 10.6 L356.6 14.6 L356.6 18.2 M352.6 10.8 L352.6 14.8 L356.4 14.8 M355.4 18.6 L355.4 24.8 M352.2 21.6 L358.6 21.6"/>
<path d="M374.6 21.6 L368.2 21.6 L368.2 10.6 L373.2 10.6 L374.8 12.2 L382.4 12.2 L382.4 17.4 M368.4 14.6 L373.4 14.6 L374.8 13.2 M379.4 18.4 L379.4 24.8 M376.2 21.6 L382.6 21.6"/>
<path d="M402.2 11.6 A5.7 5.7 0 1 1 395.4 11.8 M395.2 10 L395.2 13.8 L399 13.8" />
<path d="M420.4 14.4 L420.4 12.6 Q420.4 11.6 421.4 11.6 L427.8 11.6 Q428.8 11.6 428.8 12.6 L428.8 18.6 Q428.8 19.6 427.8 19.6 L426 19.6"/>
<rect x="417.6" y="14.6" width="8.4" height="8.2" rx="1"/><path d="M419.6 18.7 L424 18.7"/>
</g>

<g fill="#8a8a8a"><rect x="484" y="0" width="1" height="2"/><rect x="605" y="0" width="3" height="1.6" rx="0.8"/><rect x="716" y="0" width="1" height="2"/><rect x="754" y="0" width="3" height="1.6" rx="0.8"/><rect x="894" y="0" width="1" height="2"/></g>
</svg>
<div id="tip"><span style="left:7.40px;letter-spacing:-0.33px">~/shop/packages/shop-admin/src/layouts</span></div>
</body></html>
